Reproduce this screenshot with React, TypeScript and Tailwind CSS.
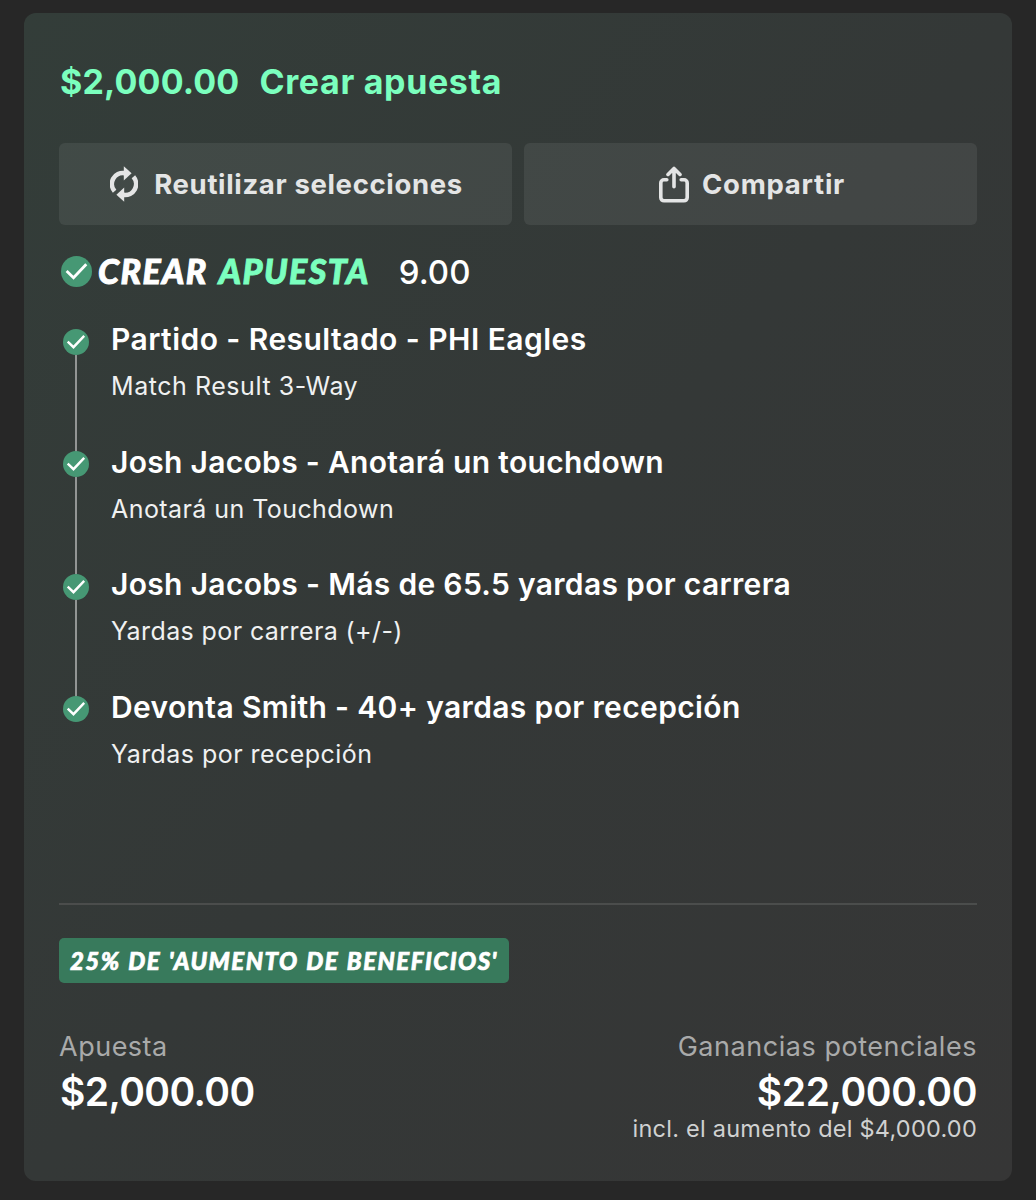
import clsx from "clsx";

type Leg = { title: string; market: string; titleClass: string; marketClass: string };

const legs: Leg[] = [
  {
    title: "Partido - Resultado - PHI Eagles",
    market: "Match Result 3-Way",
    titleClass: "tracking-[0.45px]",
    marketClass: "tracking-[0.55px]",
  },
  {
    title: "Josh Jacobs - Anotará un touchdown",
    market: "Anotará un Touchdown",
    titleClass: "tracking-[0.3px]",
    marketClass: "tracking-[0.43px]",
  },
  {
    title: "Josh Jacobs - Más de 65.5 yardas por carrera",
    market: "Yardas por carrera (+/-)",
    titleClass: "tracking-[0.32px]",
    marketClass: "tracking-[0.4px]",
  },
  {
    title: "Devonta Smith - 40+ yardas por recepción",
    market: "Yardas por recepción",
    titleClass: "tracking-[0.36px]",
    marketClass: "tracking-[0.45px]",
  },
];

function CheckBadge({ className }: { className?: string }) {
  return (
    <svg viewBox="0 0 26 26" fill="none" aria-hidden className={clsx("shrink-0", className)}>
      <circle cx="13" cy="13" r="13" fill="#469874" />
      <path d="M4.7 12.6 10.5 18.2 21.2 6.9" stroke="#fff" strokeWidth="2.4" />
    </svg>
  );
}

function ReuseIcon() {
  return (
    <svg viewBox="0 0 28 36" fill="none" aria-hidden className="h-9 w-7 shrink-0">
      <path d="M4.6 25.2A11 11 0 0 1 14.5 7.1" stroke="#e4e5e5" strokeWidth="4.6" />
      <path d="M23.4 10.8A11 11 0 0 1 13.5 28.9" stroke="#e4e5e5" strokeWidth="4.6" />
      <path d="M13.8 0.2 21.6 7.2 13.8 14.4Z" fill="#e4e5e5" />
      <path d="M14.2 35.8 6.4 28.8 14.2 21.6Z" fill="#e4e5e5" />
    </svg>
  );
}

function ShareIcon() {
  return (
    <svg
      viewBox="0 0 30 37"
      fill="none"
      stroke="#e4e5e5"
      strokeWidth="3.6"
      strokeLinecap="round"
      strokeLinejoin="round"
      aria-hidden
      className="h-[37px] w-[30px] shrink-0"
    >
      <path d="M7.8 13.8H5a3.2 3.2 0 0 0-3.2 3.2v14.6A3.2 3.2 0 0 0 5 34.8h20a3.2 3.2 0 0 0 3.2-3.2V17a3.2 3.2 0 0 0-3.2-3.2h-2.8" />
      <path d="M15 20.8V2.6M9 8.4 15 2.4l6 6" />
    </svg>
  );
}

export default function App() {
  return (
    <main className="h-[1200px] w-[1036px] bg-[#272727] px-6 pt-[13px] font-['Inter',sans-serif] text-white">
      <section className="flex h-[1168px] flex-col rounded-xl bg-linear-to-br from-[#333d39] via-[#343837] to-[#363636] px-[35px]">
        <h1 className="mt-12 flex h-10 items-center gap-[20px] pl-px text-[34px] font-bold whitespace-nowrap text-[#7bffbe]">
          <span className="tracking-[0.15px]">$2,000.00</span>
          <span className="tracking-[0.65px]">Crear apuesta</span>
        </h1>

        <div className="mt-[42px] grid grid-cols-2 gap-3 text-[27.5px] font-bold text-[#e4e5e5]">
          <button className="flex h-[82px] items-center justify-center gap-4 rounded-md bg-white/7 pl-0.5 whitespace-nowrap">
            <ReuseIcon />
            <span className="pt-0.5 tracking-[0.65px]">Reutilizar selecciones</span>
          </button>
          <button className="flex h-[82px] items-center justify-center gap-[13px] rounded-md bg-white/7 pl-[3px] whitespace-nowrap">
            <ShareIcon />
            <span className="pt-0.5 tracking-[0.75px]">Compartir</span>
          </button>
        </div>

        <div className="mt-[26px] flex h-10 items-center pl-0.5 whitespace-nowrap">
          <CheckBadge className="size-[31px]" />
          <h2 className="-mt-px ml-[6px] flex gap-[11px] font-['Lato',sans-serif] text-[34px] font-black tracking-[1.4px] italic [-webkit-text-stroke:0.9px]">
            <span>CREAR</span>
            <span className="text-[#7bffbe]">APUESTA</span>
          </h2>
          <span className="ml-[29px] pt-[3px] text-[33px] font-medium">9.00</span>
        </div>

        <ul className="mt-[27px] pl-1">
          {legs.map((leg, i) => (
            <li key={leg.market} className="flex h-[122.5px] gap-[22px] whitespace-nowrap">
              <div className="flex w-[26px] flex-col items-center pt-[10.5px]">
                <CheckBadge className="size-[26px]" />
                {i < legs.length - 1 && <span className="-mb-[11px] w-0.5 grow bg-[#929594]" />}
              </div>
              <div>
                <h3 className={clsx("text-[30px] leading-[42px] font-semibold", leg.titleClass)}>{leg.title}</h3>
                <p className={clsx("mt-2 text-[25px] leading-9 text-[#f0f1f1]", leg.marketClass)}>{leg.market}</p>
              </div>
            </li>
          ))}
        </ul>

        <hr className="mt-[95px] border-t-2 border-[#4b4d4c]" />

        <div className="mt-[33px] flex h-[45px] w-[450px] items-center justify-center rounded-[5px] bg-[#387a5c] font-['Lato',sans-serif] text-[24px] font-black tracking-[1.5px] whitespace-nowrap italic [-webkit-text-stroke:0.7px] [word-spacing:1px]">
          25% DE 'AUMENTO DE BENEFICIOS'
        </div>

        <div className="mt-[46px] flex justify-between whitespace-nowrap">
          <div>
            <p className="text-[27px] leading-9 tracking-[0.5px] text-[#a9aaaa]">Apuesta</p>
            <p className="pl-px text-[39px] leading-[54px] font-semibold tracking-[-0.6px]">$2,000.00</p>
          </div>
          <div className="text-right">
            <p className="text-[27px] leading-9 tracking-[0.54px] text-[#a9aaaa]">Ganancias potenciales</p>
            <p className="text-[39px] leading-[54px] font-semibold tracking-[-0.4px]">$22,000.00</p>
            <p className="-mt-2 text-[23.5px] leading-9 tracking-[0.24px] text-[#d0d1d1]">
              incl. el aumento del $4,000.00
            </p>
          </div>
        </div>
      </section>
    </main>
  );
}
